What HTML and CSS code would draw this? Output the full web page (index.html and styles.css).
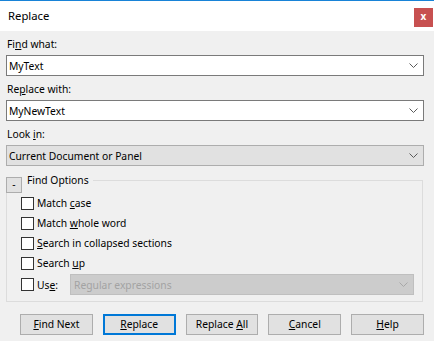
FILE: index.html
```html
<!DOCTYPE html>
<html lang="en">
<head>
    <meta charset="UTF-8">
    <title>Replace</title>
    <link rel="stylesheet" href="styles.css">
</head>
<body>
    <div class="dialog">
        <div class="titlebar">
            <span class="title">Replace</span>
            <span class="close-btn">x</span>
        </div>

        <div class="content">
            <div class="field-label">Fi<u>n</u>d what:</div>
            <div class="combo">
                <span>MyText</span>
                <svg class="chevron" width="9" height="5" viewBox="0 0 9 5"><polyline points="0.5,0.5 4.5,4.5 8.5,0.5" fill="none" stroke="#5a5a5a"/></svg>
            </div>

            <div class="field-label">Re<u>p</u>lace with:</div>
            <div class="combo">
                <span>MyNewText</span>
                <svg class="chevron" width="9" height="5" viewBox="0 0 9 5"><polyline points="0.5,0.5 4.5,4.5 8.5,0.5" fill="none" stroke="#5a5a5a"/></svg>
            </div>

            <div class="field-label">Look <u>i</u>n:</div>
            <div class="combo combo-list">
                <span>Current Document or Panel</span>
                <svg class="chevron" width="9" height="5" viewBox="0 0 9 5"><polyline points="0.5,0.5 4.5,4.5 8.5,0.5" fill="none" stroke="#5a5a5a"/></svg>
            </div>

            <!-- Find options group -->
            <div class="group">
                <div class="group-header">
                    <span class="toggle-btn">-</span>
                    <span class="group-title">Find Options</span>
                </div>
                <div class="option"><span class="checkbox"></span><span>Match <u>c</u>ase</span></div>
                <div class="option"><span class="checkbox"></span><span>Match <u>w</u>hole word</span></div>
                <div class="option"><span class="checkbox"></span><span><u>S</u>earch in collapsed sections</span></div>
                <div class="option"><span class="checkbox"></span><span>Search <u>u</u>p</span></div>
                <div class="option option-use">
                    <span class="checkbox"></span><span class="use-label">Us<u>e</u>:</span>
                    <div class="combo combo-disabled">
                        <span>Regular expressions</span>
                        <svg class="chevron" width="9" height="5" viewBox="0 0 9 5"><polyline points="0.5,0.5 4.5,4.5 8.5,0.5" fill="none" stroke="#a8a8a8"/></svg>
                    </div>
                </div>
            </div>

            <div class="buttons">
                <span class="btn"><u>F</u>ind Next</span>
                <span class="btn btn-default"><u>R</u>eplace</span>
                <span class="btn">Replace <u>A</u>ll</span>
                <span class="btn"><u>C</u>ancel</span>
                <span class="btn"><u>H</u>elp</span>
            </div>
        </div>
    </div>
</body>
</html>
```

FILE: styles.css
```css
* {
    margin: 0;
    padding: 0;
    box-sizing: border-box;
}

body {
    background: #f0f0f0;
    color: #000;
    font-family: 'Noto Sans', 'Segoe UI', sans-serif;
    font-size: 10.3px;
    width: 434px;
    height: 341px;
    overflow: hidden;
}

u {
    text-decoration-thickness: 1px;
    text-underline-offset: 1px;
}

.titlebar {
    background: #fff;
    border-top: 1px solid #1883d7;
    height: 31px;
    display: flex;
    align-items: flex-start;
    justify-content: space-between;
    padding-left: 8px;
}

.title {
    font-size: 11.3px;
    line-height: 30px;
}

.close-btn {
    margin-top: 7px;
    margin-right: 1px;
    width: 19px;
    height: 19px;
    background: #c75050;
    color: #fff;
    font-weight: bold;
    font-size: 10px;
    line-height: 17px;
    text-align: center;
}

.content {
    padding: 0 10px 0 6px;
}

.field-label {
    line-height: 15px;
    margin-top: 6px;
    padding-left: 1px;
}

.combo {
    height: 21px;
    margin-top: 3px;
    border: 1px solid #7a7a7a;
    background: #fff;
    display: flex;
    align-items: center;
    justify-content: space-between;
    padding: 0 5px 0 2px;
}

.combo-list {
    background: #e1e1e1;
    border-color: #adadad;
}

.combo-disabled {
    flex: 1;
    margin-top: 0;
    background: #cccccc;
    border-color: #bfbfbf;
    color: #a3a3a3;
    padding-left: 3px;
}

.chevron {
    flex-shrink: 0;
}

.group {
    margin: 14px 1px 0 0;
    border: 1px solid #dcdcdc;
    padding-bottom: 5px;
}

.group-header {
    display: flex;
    width: fit-content;
    align-items: flex-start;
    gap: 5px;
    margin: -4px 0 0 -1px;
    padding-right: 4px;
    background: #f0f0f0;
}

.group-title {
    line-height: 13px;
    margin-top: -3px;
}

.toggle-btn {
    width: 16px;
    height: 16px;
    border: 1px solid #adadad;
    background: #e1e1e1;
    text-align: center;
    line-height: 13px;
}

.option {
    display: flex;
    align-items: center;
    height: 20px;
    padding-left: 14px;
}

.option-use {
    height: 23px;
    padding-right: 8px;
}

.checkbox {
    width: 13px;
    height: 13px;
    border: 1px solid #333;
    background: #fff;
    margin-right: 3px;
    flex-shrink: 0;
}

.use-label {
    margin-right: 12px;
}

.buttons {
    display: flex;
    gap: 10px;
    margin-top: 12px;
    padding-left: 14px;
}

.btn {
    width: 73px;
    height: 21px;
    border: 1px solid #adadad;
    background: #e1e1e1;
    text-align: center;
    line-height: 19px;
}

.btn-default {
    border: 2px solid #0078d7;
    line-height: 17px;
}
```
